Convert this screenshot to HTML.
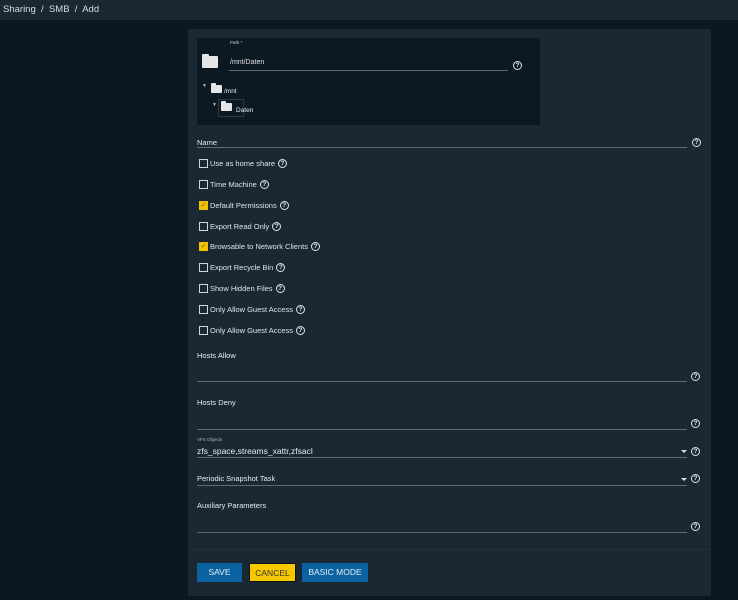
<!DOCTYPE html>
<html><head><meta charset="utf-8"><style>
*{box-sizing:border-box;margin:0;padding:0}
body{width:738px;height:600px;background:#0c1821;font-family:"Liberation Sans",sans-serif;color:#e8ecef;position:relative;overflow:hidden;font-size:7px}
.top{position:absolute;left:0;top:0;width:738px;height:20px;background:#1a2833;font-size:9.5px;color:#d7dde2;padding:4px 0 0 3px}
.card{position:absolute;left:188px;top:29px;width:523px;height:567px;background:#192832}
.tree{position:absolute;left:197px;top:38px;width:343px;height:87px;background:#0d1922}
.abs{position:absolute}
.folder{position:absolute;background:#e6e6e6;border-radius:1px}
.folder:before{content:"";position:absolute;left:0;top:-2px;width:45%;height:3px;background:#e6e6e6;border-radius:1px 1px 0 0}
.line{position:absolute;height:1px;background:#5d6a74}
.q{position:absolute;width:9px;height:9px;border:1px solid #dfe4e8;border-radius:50%;font-size:6.5px;line-height:7px;text-align:center;color:#dfe4e8;font-weight:bold}
.row{position:absolute;left:199px;display:flex;align-items:center;height:11px}
.cb{width:9px;height:9px;border:1px solid #cfd5da;margin-right:2px;font-size:7px;line-height:7px;text-align:center;color:#6b5a00}
.cb.on{background:#f2c200;border-color:#f2c200}
.lbl{font-size:7.5px;color:#dfe4e8;margin-right:3px}
.qi{width:9px;height:9px;border:1px solid #dfe4e8;border-radius:50%;font-size:6.5px;line-height:7px;text-align:center;color:#dfe4e8;font-weight:bold}
.arrow{position:absolute;width:0;height:0;border-left:3px solid transparent;border-right:3px solid transparent;border-top:3px solid #ddd}
.btn{position:absolute;top:563px;height:19px;font-size:8.5px;text-align:center;line-height:19px}
</style></head><body>
<div class="top">Sharing &nbsp;/&nbsp; SMB &nbsp;/&nbsp; Add</div>
<div class="card"></div>
<div class="tree"></div>
<div class="abs" style="left:230px;top:40px;font-size:4.5px;color:#ccc">Path *</div>
<div class="folder" style="left:202px;top:56px;width:16px;height:12px"></div>
<div class="abs" style="left:230px;top:59px;color:#e0e0e0">/mnt/Daten</div>
<div class="line" style="left:229px;top:70px;width:279px"></div>
<div class="q" style="left:513px;top:61px">?</div>
<div class="abs" style="left:202px;top:83px;font-size:5px;color:#bbb">▼</div>
<div class="folder" style="left:211px;top:85px;width:11px;height:8px"></div>
<div class="abs" style="left:224px;top:88px;font-size:6.5px">/mnt</div>
<div class="abs" style="left:218px;top:99px;width:26px;height:18px;border:1px solid #2a3843"></div>
<div class="abs" style="left:212px;top:102px;font-size:5px;color:#bbb">▼</div>
<div class="folder" style="left:221px;top:103px;width:11px;height:8px"></div>
<div class="abs" style="left:236px;top:107px;font-size:6.5px">Daten</div>
<div class="abs" style="left:197px;top:138px;font-size:7.5px">Name</div>
<div class="line" style="left:197px;top:147px;width:490px"></div>
<div class="q" style="left:692px;top:138px">?</div>

<div class="row" style="top:158px"><div class="cb"></div><span class="lbl">Use as home share</span><div class="qi">?</div></div>
<div class="row" style="top:179px"><div class="cb"></div><span class="lbl">Time Machine</span><div class="qi">?</div></div>
<div class="row" style="top:200px"><div class="cb on">✓</div><span class="lbl">Default Permissions</span><div class="qi">?</div></div>
<div class="row" style="top:221px"><div class="cb"></div><span class="lbl">Export Read Only</span><div class="qi">?</div></div>
<div class="row" style="top:241px"><div class="cb on">✓</div><span class="lbl">Browsable to Network Clients</span><div class="qi">?</div></div>
<div class="row" style="top:262px"><div class="cb"></div><span class="lbl">Export Recycle Bin</span><div class="qi">?</div></div>
<div class="row" style="top:283px"><div class="cb"></div><span class="lbl">Show Hidden Files</span><div class="qi">?</div></div>
<div class="row" style="top:304px"><div class="cb"></div><span class="lbl">Only Allow Guest Access</span><div class="qi">?</div></div>
<div class="row" style="top:325px"><div class="cb"></div><span class="lbl">Only Allow Guest Access</span><div class="qi">?</div></div>

<div class="abs" style="left:197px;top:351px;font-size:7.5px">Hosts Allow</div>
<div class="line" style="left:197px;top:381px;width:490px"></div>
<div class="q" style="left:691px;top:372px">?</div>
<div class="abs" style="left:197px;top:398px;font-size:7.5px">Hosts Deny</div>
<div class="line" style="left:197px;top:429px;width:490px"></div>
<div class="q" style="left:691px;top:419px">?</div>
<div class="abs" style="left:197px;top:437px;font-size:4.5px;color:#bbb">VFS Objects</div>
<div class="abs" style="left:197px;top:446px;font-size:8.5px">zfs_space,streams_xattr,zfsacl</div>
<div class="arrow" style="left:681px;top:450px"></div>
<div class="line" style="left:197px;top:457px;width:490px"></div>
<div class="q" style="left:691px;top:447px">?</div>
<div class="abs" style="left:197px;top:474px;font-size:7.5px">Periodic Snapshot Task</div>
<div class="arrow" style="left:681px;top:478px"></div>
<div class="line" style="left:197px;top:485px;width:490px"></div>
<div class="q" style="left:691px;top:474px">?</div>
<div class="abs" style="left:197px;top:501px;font-size:7.5px">Auxiliary Parameters</div>
<div class="line" style="left:197px;top:532px;width:490px"></div>
<div class="q" style="left:691px;top:522px">?</div>
<div class="line" style="left:188px;top:549px;width:523px;background:#22323d"></div>
<div class="btn" style="left:197px;width:45px;background:#0a63a0;color:#e8eef3">SAVE</div>
<div class="btn" style="left:249px;width:47px;background:#f5c800;color:#333;border:1px solid #111">CANCEL</div>
<div class="btn" style="left:302px;width:66px;background:#0a63a0;color:#e8eef3">BASIC MODE</div>
</body></html>
